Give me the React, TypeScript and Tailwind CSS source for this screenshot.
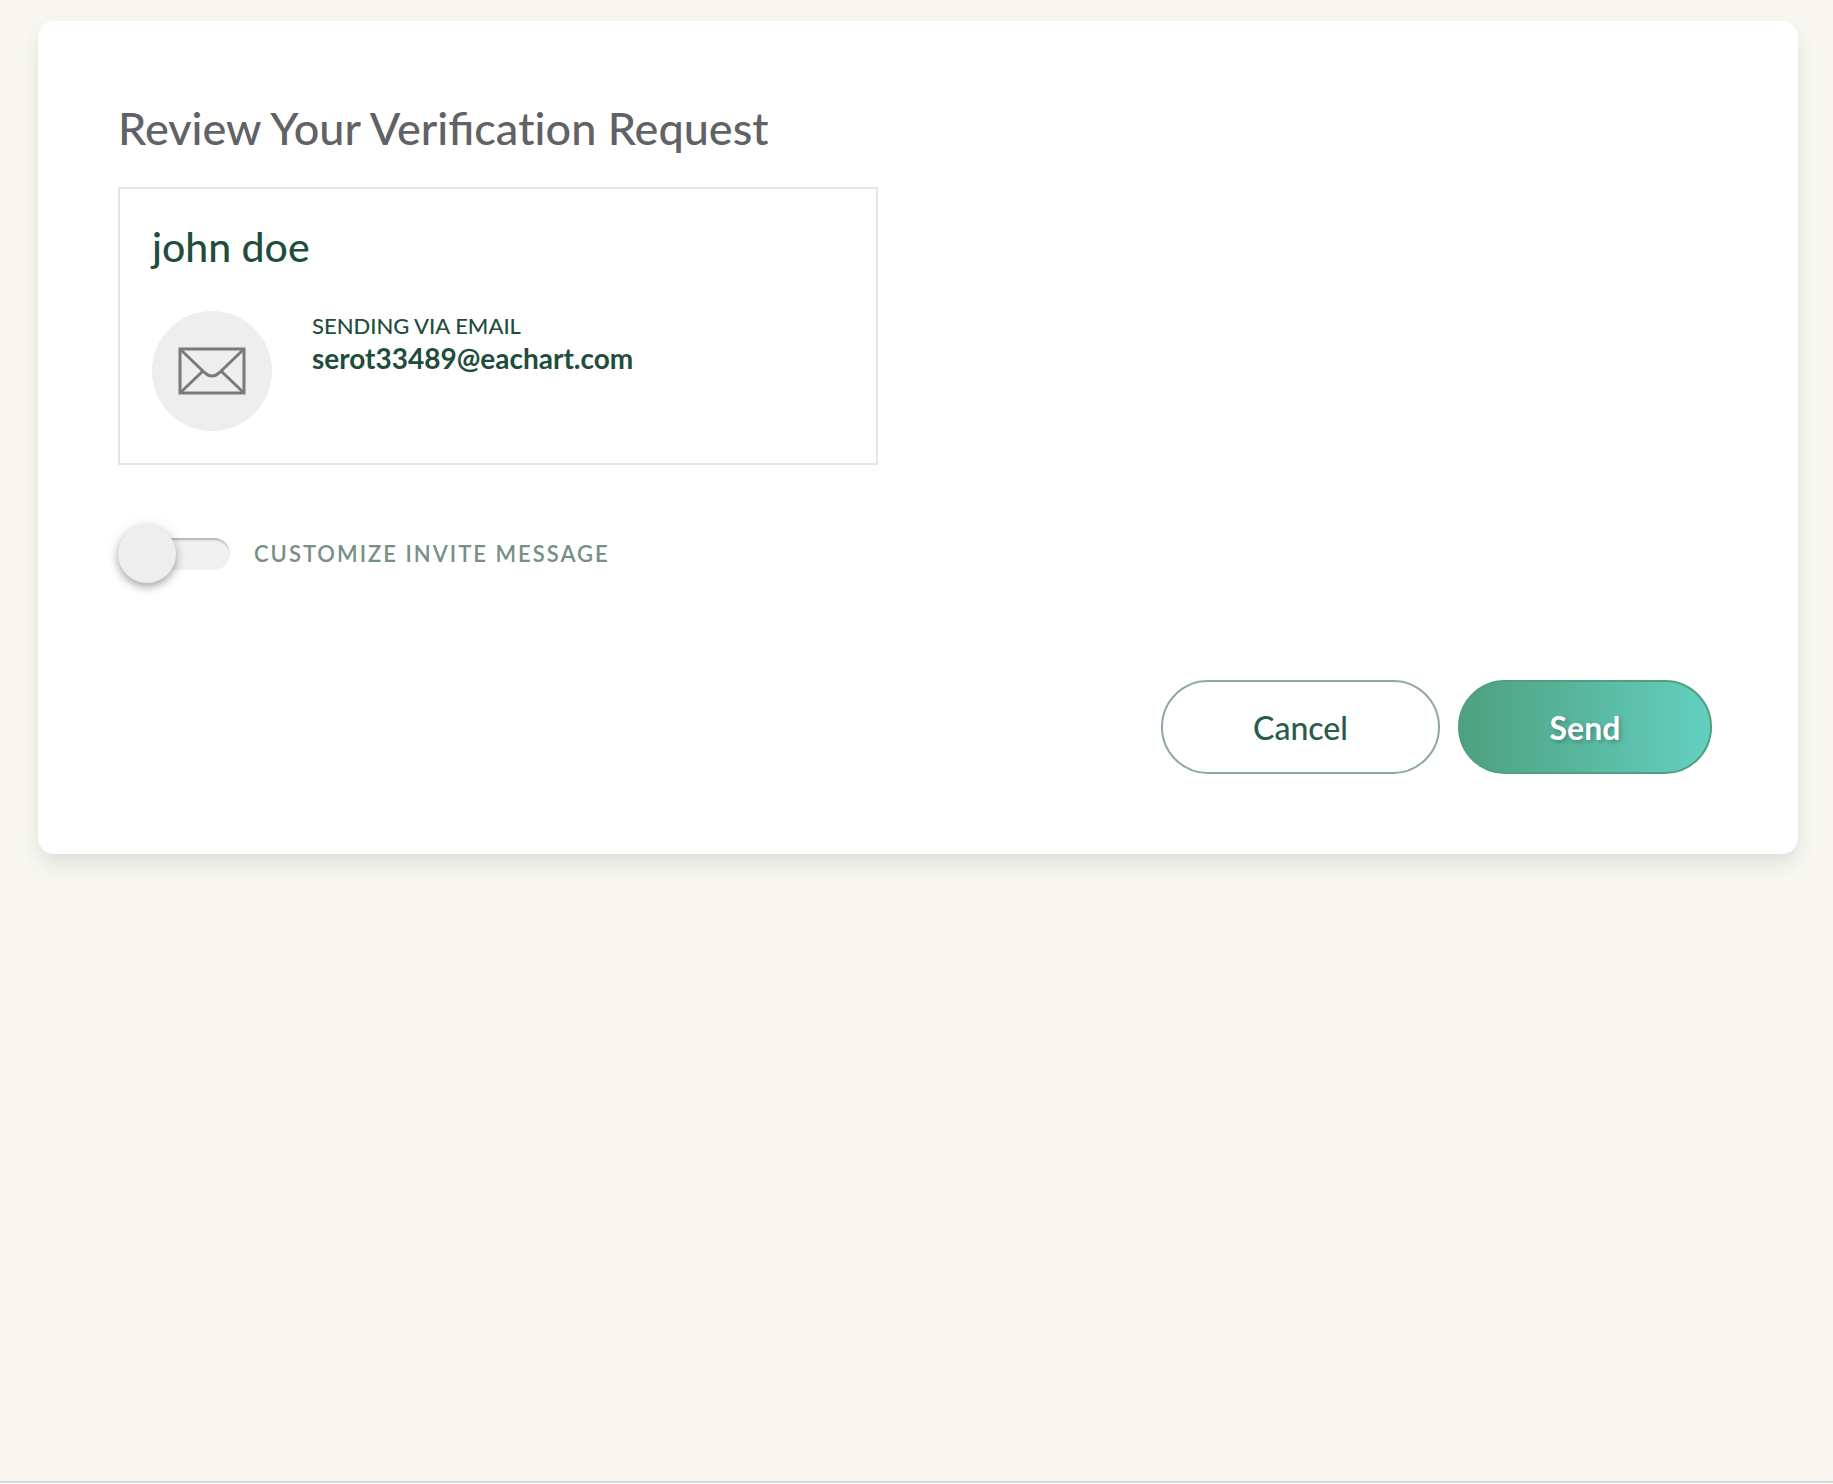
import { useState } from "react";

function EnvelopeIcon() {
  return (
    <svg width="68" height="48" viewBox="0 0 68 48" fill="none" stroke="#7a7a7a" strokeWidth="3" aria-hidden="true">
      <rect x="2" y="2" width="64" height="44" />
      <path d="M3 3 L27 26 Q34 32 41 26 L65 3" />
      <path d="M25 24 L3 45 M43 24 L65 45" />
    </svg>
  );
}

export default function App() {
  const [customize, setCustomize] = useState(false);

  return (
    <div className="flex min-h-screen flex-col bg-[#f8f7f2] font-['Lato',sans-serif] text-[#1f4d3c]">
      <main className="flex-1 pt-[21px] pr-[35px] pl-[38px]">
        <section className="rounded-2xl bg-white px-20 pt-[79px] pb-20 shadow-[0_10px_20px_-2px_rgba(60,70,65,0.15)]">
          <h1 className="text-[45px] leading-[56px] font-medium text-[#616266]">
            Review Your Verifica<span className="[font-variant-ligatures:none]">tion</span> Request
          </h1>

          <div className="mt-[31px] max-w-[760px] border-2 border-[#e5e5e5] p-8">
            <h2 className="text-[41px] leading-[52px] font-medium">john doe</h2>
            <div className="mt-[38px] flex gap-10">
              <div className="flex size-[120px] shrink-0 items-center justify-center rounded-full bg-[#eeeeee]">
                <EnvelopeIcon />
              </div>
              <div>
                <p className="text-[22px] leading-[30px] font-medium">SENDING VIA EMAIL</p>
                <p className="text-[28px] leading-[34px] font-bold">serot33489@eachart.com</p>
              </div>
            </div>
          </div>

          <label className="mt-[60px] flex w-fit cursor-pointer items-center gap-6">
            <span className="relative flex h-[58px] w-28 items-center">
              <input
                type="checkbox"
                role="switch"
                checked={customize}
                onChange={(e) => setCustomize(e.target.checked)}
                className="peer ml-2 h-8 w-full cursor-pointer appearance-none rounded-full bg-[#f1f1f1] shadow-[inset_0_3px_2px_-1px_rgba(0,0,0,0.25)]"
              />
              <span className="pointer-events-none absolute top-0 left-0 size-[58px] rounded-full bg-[#eeeeee] shadow-[0_4px_8px_rgba(0,0,0,0.3),0_0_16px_rgba(0,0,0,0.08)] peer-checked:right-0 peer-checked:left-auto peer-checked:bg-[#4ea07f]" />
            </span>
            <span className="text-[22px] leading-8 font-semibold tracking-[2px] text-[#788f86]">CUSTOMIZE INVITE MESSAGE</span>
          </label>

          <div className="mt-[97px] flex justify-end gap-[18px] pr-1.5">
            <button
              type="button"
              className="h-[94px] w-[279px] rounded-full border-2 border-[#8fa99f] bg-white pt-0.5 text-[32px] font-medium text-[#2a5b4b]"
            >
              Cancel
            </button>
            <button
              type="button"
              className="h-[94px] w-[254px] rounded-full border-2 border-[#4ea07f] bg-linear-to-r from-[#4ea07f] to-[#64d0c0] pt-0.5 text-[32px] font-bold text-white [text-shadow:2px_2px_4px_rgba(0,0,0,0.25)]"
            >
              Send
            </button>
          </div>
        </section>
      </main>
      <footer className="h-[3px] border-t-2 border-[#d1dad5] bg-white" />
    </div>
  );
}
